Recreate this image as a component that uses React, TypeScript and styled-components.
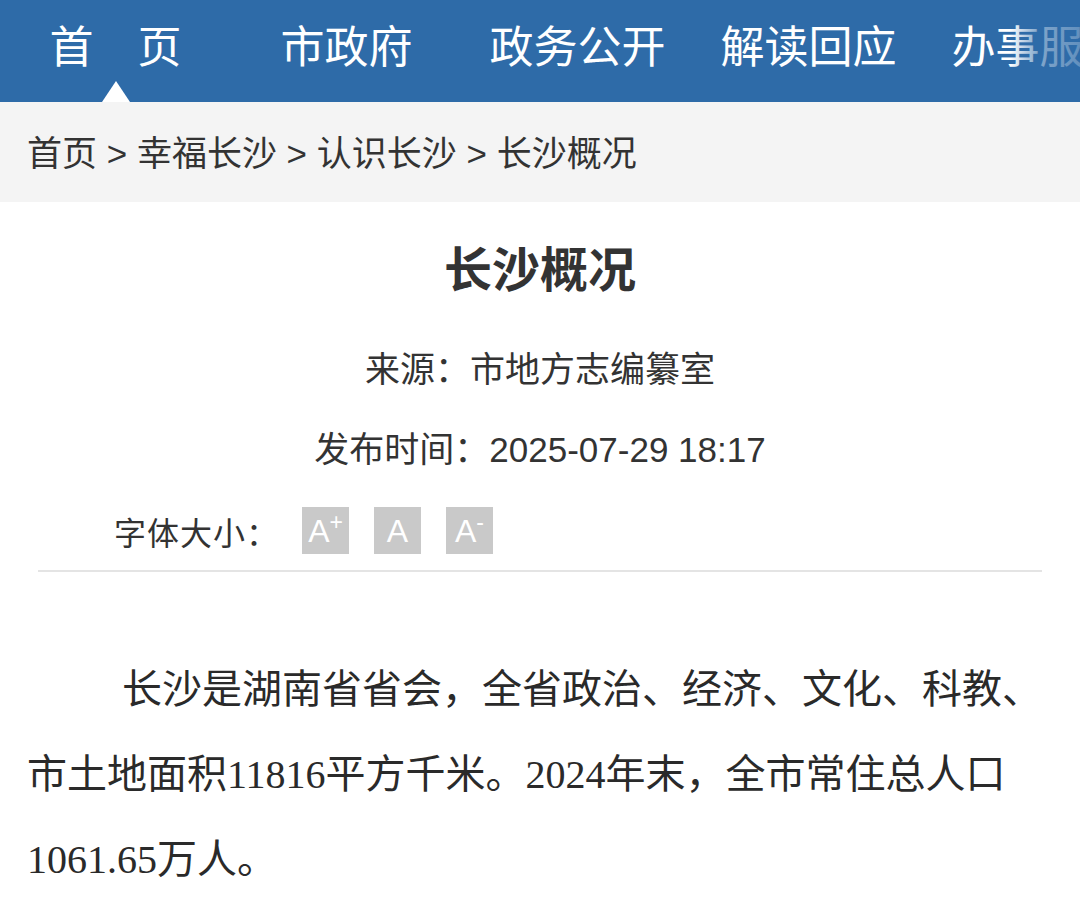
import React from "react";
import styled, { createGlobalStyle } from "styled-components";

const GlobalStyle = createGlobalStyle`
    html, body {
        margin: 0;
        padding: 0;
        background: #ffffff;
    }
    body {
        font-family: "Liberation Sans", "Noto Sans CJK SC", sans-serif;
        color: #333333;
    }
`;

const NAV_BLUE = "#2e6ba8";

const Page = styled.div`
    width: 1080px;
    min-height: 921px;
    overflow: hidden;
    background: #ffffff;
`;

const NavBar = styled.nav`
    position: relative;
    display: flex;
    height: 102px;
    background: ${NAV_BLUE};
    overflow: hidden;
`;

const NavItem = styled.div<{ $active?: boolean }>`
    position: relative;
    flex: 0 0 231px;
    height: 102px;
    padding-bottom: 14px;
    box-sizing: border-box;
    line-height: 88px;
    text-align: center;
    font-family: "Noto Sans CJK SC", sans-serif;
    font-size: 44px;
    color: #ffffff;
    white-space: pre;

    &::after {
        content: "";
        display: ${(p) => (p.$active ? "block" : "none")};
        position: absolute;
        left: 50%;
        bottom: 0;
        margin-left: -14px;
        border-left: 14px solid transparent;
        border-right: 14px solid transparent;
        border-bottom: 21px solid #ffffff;
    }
`;

const NavFade = styled.div`
    position: absolute;
    top: 0;
    right: 0;
    width: 70px;
    height: 100%;
    background: linear-gradient(to right, rgba(46, 107, 168, 0), rgba(46, 107, 168, 0.6) 40%, rgba(46, 107, 168, 0.75));
`;

const Breadcrumb = styled.div`
    height: 100px;
    padding: 0 27px 4px;
    box-sizing: border-box;
    display: flex;
    align-items: center;
    background: #f4f4f4;
    font-family: "Liberation Sans", "Noto Sans CJK SC", sans-serif;
    font-size: 35px;
    color: #333333;
    white-space: pre;
`;

const Article = styled.article`
    display: flex;
    flex-direction: column;
    padding: 0 38px;
`;

const Title = styled.h1`
    margin: 34px 0 0;
    line-height: 60px;
    text-align: center;
    font-family: "Noto Sans CJK SC", sans-serif;
    font-size: 48px;
    font-weight: 700;
    color: #333333;
`;

const MetaLine = styled.div<{ $top: number }>`
    margin-top: ${(p) => p.$top}px;
    line-height: 50px;
    text-align: center;
    font-family: "Liberation Sans", "Noto Sans CJK SC", sans-serif;
    font-size: 35px;
    color: #333333;
    white-space: pre;
`;

const FontSizeRow = styled.div`
    display: flex;
    align-items: center;
    margin-top: 32px;
    padding-left: 76px;
    height: 47px;
`;

const FontSizeLabel = styled.span`
    font-family: "Noto Sans CJK SC", sans-serif;
    font-size: 32px;
    letter-spacing: 1px;
    color: #333333;
    margin-right: 23px;
`;

const SizeButton = styled.button`
    display: flex;
    align-items: center;
    justify-content: center;
    width: 47px;
    height: 47px;
    margin-right: 25px;
    padding: 0;
    border: none;
    background: #c9c9c9;
    color: #ffffff;
    font-family: "Liberation Sans", sans-serif;
    font-size: 32px;
    line-height: 1;
    cursor: pointer;
`;

const SizeMark = styled.span`
    align-self: flex-start;
    margin-top: 4px;
    font-size: 23px;
    line-height: 1;
`;

const Divider = styled.hr`
    margin: 16px 0 0;
    border: none;
    height: 2px;
    background: #e4e4e4;
`;

const Body = styled.p`
    margin: 75px 0 0;
    padding: 0 27px;
    text-indent: 95px;
    line-height: 85px;
    font-family: "Liberation Serif", "Noto Sans CJK SC", serif;
    font-size: 40px;
    color: #2a2a2a;
    white-space: nowrap;
`;

const navItems = ["首　页", "市政府", "政务公开", "解读回应", "办事服务"];
const crumbs = ["首页", "幸福长沙", "认识长沙", "长沙概况"];

export const App: React.FC = () => {
    return (
        <Page>
            <GlobalStyle />
            <NavBar>
                {navItems.map((x, idx) => (
                    <NavItem key={x} $active={idx === 0}>
                        {x}
                    </NavItem>
                ))}
                <NavFade />
            </NavBar>
            <Breadcrumb>{crumbs.join(" > ")}</Breadcrumb>
            <Article>
                <Title>长沙概况</Title>
                <MetaLine $top={49}>来源：市地方志编纂室</MetaLine>
                <MetaLine $top={30}>发布时间：2025-07-29 18:17</MetaLine>
                <FontSizeRow>
                    <FontSizeLabel>字体大小：</FontSizeLabel>
                    <SizeButton>
                        A<SizeMark>+</SizeMark>
                    </SizeButton>
                    <SizeButton>A</SizeButton>
                    <SizeButton>
                        A<SizeMark>-</SizeMark>
                    </SizeButton>
                </FontSizeRow>
                <Divider />
            </Article>
            <Body>
                长沙是湖南省省会，全省政治、经济、文化、科教、
                <br />
                市土地面积11816平方千米。2024年末，全市常住总人口
                <br />
                1061.65万人。
            </Body>
        </Page>
    );
};

export default App;
